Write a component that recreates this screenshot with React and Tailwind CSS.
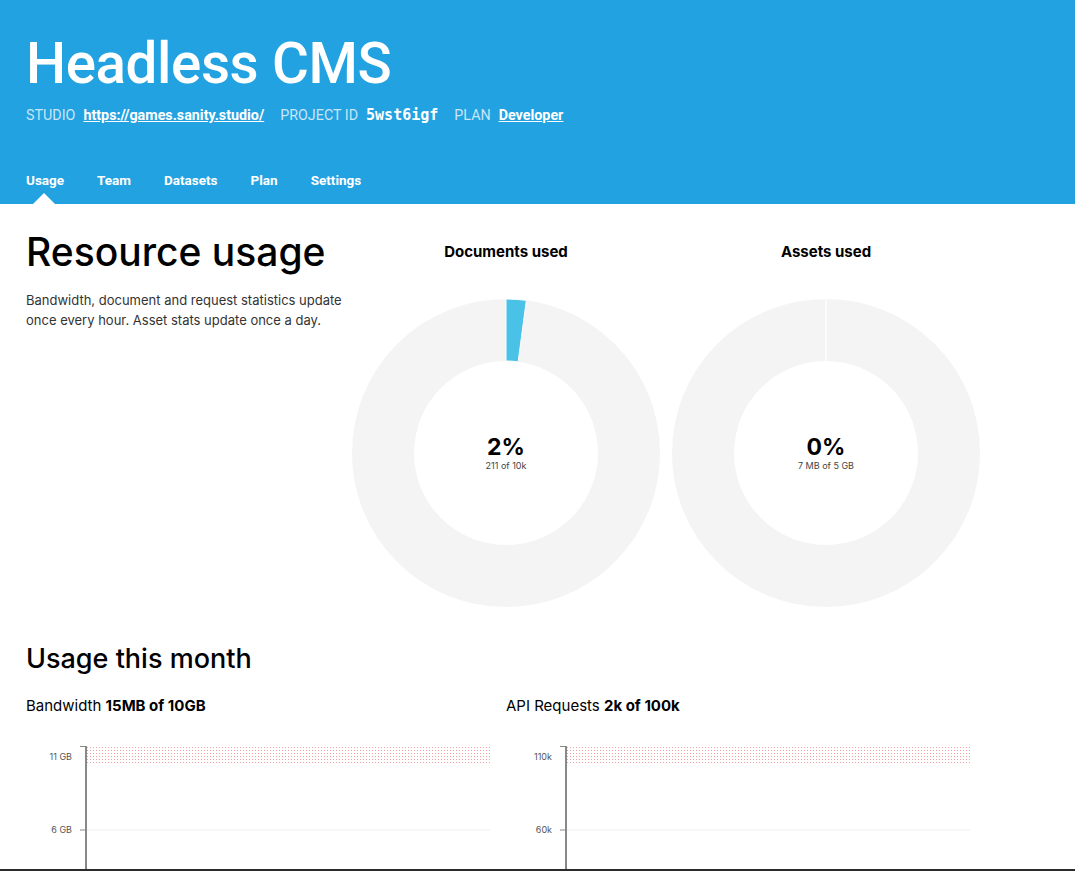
import React from "react";

const tabs = ["Usage", "Team", "Datasets", "Plan", "Settings"];

function arcPath(cx, cy, ro, ri, a0, a1) {
    const p = (r, a) => [cx + r * Math.sin(a), cy - r * Math.cos(a)];
    const large = a1 - a0 > Math.PI ? 1 : 0;
    const [x0, y0] = p(ro, a0);
    const [x1, y1] = p(ro, a1);
    const [x2, y2] = p(ri, a1);
    const [x3, y3] = p(ri, a0);
    return `M${x0} ${y0} A${ro} ${ro} 0 ${large} 1 ${x1} ${y1} L${x2} ${y2} A${ri} ${ri} 0 ${large} 0 ${x3} ${y3} Z`;
}

function Donut({ title, ratio, percent, detail }) {
    const a = ratio * Math.PI * 2;
    return (
        <div className="flex flex-col items-center">
            <div className="mt-[35px] text-[15px] font-bold text-black leading-[22px]">{title}</div>
            <div className="relative mt-[35px] h-[310px] w-[310px]">
                <svg width="310" height="310" viewBox="0 0 310 310">
                    <circle cx="155" cy="155" r="123" fill="none" stroke="#f4f4f4" strokeWidth="62" />
                    {ratio > 0 ? (
                        <path d={arcPath(155, 155, 154, 92, 0, a)} fill="#4ac2e8" stroke="#fff" strokeWidth="1" />
                    ) : (
                        <line x1="155" y1="0" x2="155" y2="63" stroke="#fff" strokeWidth="1.5" />
                    )}
                </svg>
                <div className="absolute inset-0 flex flex-col items-center justify-center">
                    <div className="text-[23px] font-bold leading-[26px] text-black">{percent}</div>
                    <div className="text-[9px] leading-[12px] text-[#444]">{detail}</div>
                </div>
            </div>
        </div>
    );
}

function Chart({ id, label, value, top, mid }) {
    return (
        <div>
            <div className="text-[15px] leading-[20px] text-black">
                {label} <span className="font-bold">{value}</span>
            </div>
            <svg className="mt-[24px]" width="480" height="135" viewBox="0 0 480 135">
                <defs>
                    <pattern id={`dots-${id}`} width="3" height="3" patternUnits="userSpaceOnUse">
                        <rect x="1" y="1" width="1" height="1" fill="#f4a0a0" />
                    </pattern>
                </defs>
                <rect x="61" y="6" width="403" height="17" fill={`url(#dots-${id})`} />
                <line x1="61" y1="90" x2="464" y2="90" stroke="#efefef" strokeWidth="1" />
                <line x1="60" y1="6" x2="60" y2="135" stroke="#888" strokeWidth="2" />
                <line x1="54" y1="6.5" x2="60" y2="6.5" stroke="#888" strokeWidth="1" />
                <line x1="54" y1="90" x2="60" y2="90" stroke="#888" strokeWidth="1" />
                <text x="46" y="20" textAnchor="end" fontSize="9" fill="#555" fontFamily="Inter, sans-serif">{top}</text>
                <text x="46" y="93" textAnchor="end" fontSize="9" fill="#555" fontFamily="Inter, sans-serif">{mid}</text>
            </svg>
        </div>
    );
}

export default function App() {
    return (
        <div className="h-[871px] overflow-hidden border-b-2 border-[#2b2b2b] bg-white font-['Inter',sans-serif]">
            <header className="bg-[#23a2e1] px-[26px] text-white">
                <h1 className="pt-[29px] text-[56.5px] font-medium leading-[70px] tracking-[-0.4px] font-['Roboto',sans-serif]">
                    Headless CMS
                </h1>
                <div className="mt-[7px] flex items-center text-[14.3px] leading-[18px] font-['Roboto',sans-serif]">
                    <span className="text-white/75">STUDIO</span>
                    <a className="ml-[8px] font-bold underline">https://games.sanity.studio/</a>
                    <span className="ml-[16px] text-white/75">PROJECT ID</span>
                    <span className="ml-[8px] font-bold text-[15px] font-['DejaVu_Sans_Mono',monospace]">5wst6igf</span>
                    <span className="ml-[16px] text-white/75">PLAN</span>
                    <a className="ml-[8px] font-bold underline">Developer</a>
                </div>
                <nav className="mt-[47px] flex gap-[33px] text-[13.5px] font-bold leading-[18px] font-['Roboto',sans-serif]">
                    {tabs.map((t, i) => (
                        <div key={t} className="relative pb-[15px]">
                            {t}
                            {i === 0 && (
                                <span className="absolute bottom-0 left-[7px] h-0 w-0 border-x-[11px] border-b-[11px] border-x-transparent border-b-white" />
                            )}
                        </div>
                    ))}
                </nav>
            </header>

            <main className="px-[26px] pt-[2px]">
                <div className="grid grid-cols-[320px_320px_320px]">
                    <div>
                        <h2 className="mt-[21px] text-[39px] font-medium leading-[50px] text-black">Resource usage</h2>
                        <p className="mt-[13px] text-[13px] leading-[20px] text-[#333]">
                            Bandwidth, document and request statistics update once every hour. Asset stats update once a day.
                        </p>
                    </div>
                    <Donut title="Documents used" ratio={0.0211} percent="2%" detail="211 of 10k" />
                    <Donut title="Assets used" ratio={0} percent="0%" detail="7 MB of 5 GB" />
                </div>

                <h2 className="mt-[33px] text-[27px] font-medium leading-[36px] text-black">Usage this month</h2>
                <div className="mt-[19px] grid grid-cols-[480px_480px]">
                    <Chart id="bw" label="Bandwidth" value="15MB of 10GB" top="11 GB" mid="6 GB" />
                    <Chart id="api" label="API Requests" value="2k of 100k" top="110k" mid="60k" />
                </div>
            </main>
        </div>
    );
}
